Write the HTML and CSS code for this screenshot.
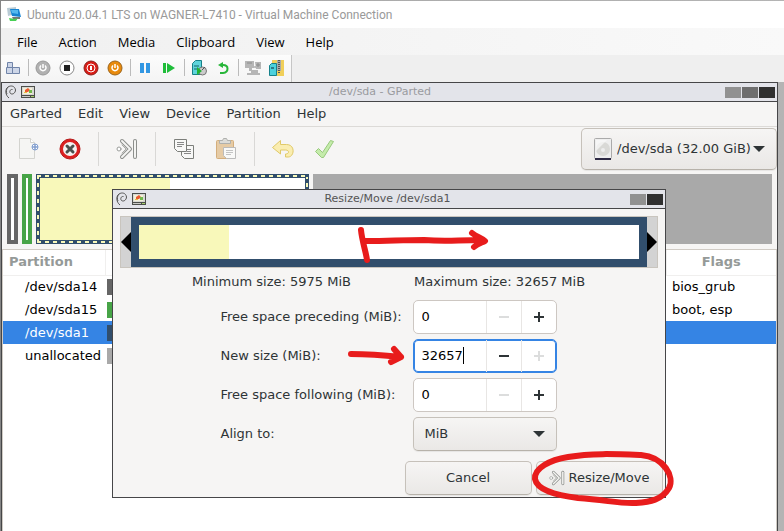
FILE: index.html
```html
<!DOCTYPE html>
<html lang="en">
<head>
<meta charset="utf-8">
<title>Ubuntu 20.04.1 LTS on WAGNER-L7410 - Virtual Machine Connection</title>
<link rel="stylesheet" href="styles.css">
</head>
<body>
<svg class="defs" aria-hidden="true">
  <defs>
    <symbol id="swirl" viewBox="0 0 12 14"><path d="M4 13C0 10 0 4 3 2 6 0 10 1 10.500 5c0 3-3 5-5 3.500C4 7 5 4 7.500 4.500M3 2C1 4 1 7 2 9" fill="none" stroke="#555" stroke-width="1"/></symbol>
    <symbol id="gparted" viewBox="0 0 14 12"><path d="M0 0h14v12H0z" fill="#4c4e4a"/><path d="M1 1h12v8H1z" fill="#d8d8d2"/><path d="M2 2h9v6H2z" fill="#f3efd8"/><path d="M4 4l3-2 2 2-2 2H4z" fill="#ec5a30"/><path d="M8 4h3v3H8z" fill="#71b84c"/><path d="M3 6h3v1H3z" fill="#e5bc45"/><path d="M1 10h8v1H1z" fill="#c8c8c4"/><path d="M10 10h3v1h-3z" fill="#a6d06c"/></symbol>
    <symbol id="resize" viewBox="0 0 22 22"><g fill="none" stroke-linecap="round" stroke-linejoin="round"><path d="M6 3l8 8-8 8" stroke="#8d8f8c" stroke-width="4"/><path d="M6 3l8 8-8 8" stroke="#f4f4f2" stroke-width="2"/><path d="M6 7l4 4-4 4" stroke="#a9aba8"/><circle cx="3" cy="11" r="2" fill="#fff" stroke="#9b9d9a"/><path d="M19 3v16" stroke="#8d8f8c" stroke-width="4"/><path d="M19 3v16" stroke="#f4f4f2" stroke-width="2"/></g></symbol>
  </defs>
</svg>
<header class="vm">
  <div class="vm-title">
    <svg width="15" height="15" viewBox="0 0 15 15"><path d="M0 1l9-1v7L1 9z" fill="#b9cbd5"/><path d="M3 2l9 0 2 8-9-1z" fill="#1784d1"/><path d="M4 3l7 0v4L5 6z" fill="#54b9ef"/><path d="M5 10h8v2H6z" fill="#777"/><path d="M2 11l6 1 3-1-2 3-6 0z" fill="#48cf55"/></svg>
    <span>Ubuntu 20.04.1 LTS on WAGNER-L7410 - Virtual Machine Connection</span>
  </div>
  <nav class="vm-menu"><button>File</button><button>Action</button><button>Media</button><button>Clipboard</button><button>View</button><button>Help</button></nav>
  <div class="vm-tools">
    <button aria-label="Ctrl+Alt+Delete"><svg width="16" height="16" viewBox="0 0 16 16"><g fill="#cdd6e8" stroke="#7084a8"><path d="M2.500 2.500h5v5h-5zM1.500 7.500h6v6h-6zM7.500 7.500h7v6h-7z"/></g></svg></button>
    <i></i>
    <button aria-label="Start"><svg width="16" height="16" viewBox="0 0 16 16"><circle cx="8" cy="8" r="7" fill="#b1b1b1" stroke="#999"/><path d="M6 5.500a3 3 0 1 0 4 0M8 4v4" fill="none" stroke="#fff" stroke-width="1.500"/></svg></button>
    <button aria-label="Turn off"><svg width="16" height="16" viewBox="0 0 16 16"><circle cx="8" cy="8" r="7" fill="#fff" stroke="#888"/><path d="M5 5h6v6H5z" fill="#222"/></svg></button>
    <button aria-label="Shut down"><svg width="16" height="16" viewBox="0 0 16 16"><circle cx="8" cy="8" r="7" fill="#d91c16" stroke="#8d201c"/><circle cx="8" cy="8" r="4" fill="none" stroke="#fff" stroke-width="1"/><path d="M8 6v4" stroke="#fff" stroke-width="2"/></svg></button>
    <button aria-label="Save"><svg width="16" height="16" viewBox="0 0 16 16"><circle cx="8" cy="8" r="7" fill="#e88a0c" stroke="#9a641c"/><path d="M6 5.500a3 3 0 1 0 4 0M8 4v4" fill="none" stroke="#fff" stroke-width="1.500"/></svg></button>
    <i></i>
    <button aria-label="Pause"><svg width="16" height="16" viewBox="0 0 16 16"><path d="M3 3h4v10H3zM9 3h4v10H9z" fill="#3297e3"/></svg></button>
    <button aria-label="Reset"><svg width="16" height="16" viewBox="0 0 16 16"><path d="M2 3h3v10H2zM6 3l8 5-8 5z" fill="#1fbd3a"/></svg></button>
    <i></i>
    <button aria-label="Checkpoint"><svg width="16" height="16" viewBox="0 0 16 16"><path d="M1.500 3.500l3-3h6v14h-9z" fill="#5fd4db" stroke="#178088"/><path d="M3 6h5M3 9h4" stroke="#15636b"/><circle cx="11.500" cy="11" r="4" fill="#ccc" stroke="#777"/><path d="M6 7l5 4-5 4z" fill="#22b331"/><path d="M11 10l3-3" stroke="#555"/></svg></button>
    <button aria-label="Revert"><svg width="16" height="16" viewBox="0 0 16 16"><path d="M5 5h3c6 0 6 7 0 8H5" fill="none" stroke="#28b63a" stroke-width="2"/><path d="M8 2v6L3 5z" fill="#28b63a"/></svg></button>
    <i></i>
    <button aria-label="Enhanced session"><svg width="16" height="16" viewBox="0 0 16 16"><path d="M0 1h9v7H0zM10 2h6v7h-5zM4 8h3v3H4zM6 10h7v3H6zM2 13h13v2H2z" fill="#b6b6b6"/><path d="M9 7h2M11 5h4M13 3v4M2 3h5" stroke="#8c8c8c"/></svg></button>
    <button aria-label="Share"><svg width="16" height="16" viewBox="0 0 16 16"><path d="M3 0h12v16H3z" fill="#f0cf5a"/><path d="M8 0h4v11H8z" fill="#aaa"/><path d="M10 0v13" stroke="#555" stroke-dasharray="1 1" stroke-width="2"/><path d="M.5 5.500l2-2h5v12h-7z" fill="#4dd1dc" stroke="#16818b"/><path d="M2 8h3" stroke="#123"/></svg></button>
  </div>
</header>
<main class="win">
  <div class="bar">
    <svg width="12" height="14"><use href="#swirl"/></svg><svg width="14" height="12"><use href="#gparted"/></svg>
    <h1>/dev/sda - GParted</h1>
    <div class="ctl"><button class="c1" aria-label="Minimize"></button><button class="c2" aria-label="Maximize"></button><button class="c3" aria-label="Close"></button></div>
  </div>
  <nav class="menu"><button>GParted</button><button>Edit</button><button>View</button><button>Device</button><button>Partition</button><button>Help</button></nav>
  <div class="tools">
    <button aria-label="New"><svg width="22" height="24" viewBox="0 0 22 24"><path d="M2.500 1.500h11l4 4v16h-15z" fill="#f5f5f3" stroke="#d3d3cf"/><path d="M13.500 1.500v4h4" fill="#fff" stroke="#d3d3cf"/><circle cx="18" cy="10" r="3" fill="#fff" stroke="#829fcf"/><path d="M18 7v6M15 10h6" stroke="#829fcf" stroke-width="1.500"/></svg></button>
    <button aria-label="Delete"><svg width="22" height="22" viewBox="0 0 22 22"><circle cx="11" cy="11" r="8.500" fill="#f4f3f2" stroke="#dc2020" stroke-width="3"/><circle cx="11" cy="11" r="10" fill="none" stroke="#b51b1b" stroke-width="1"/><path d="M8 8l6 6M14 8l-6 6" stroke="#4c504d" stroke-width="3" stroke-linecap="round"/></svg></button>
    <i></i>
    <button aria-label="Resize/Move"><svg width="22" height="22"><use href="#resize"/></svg></button>
    <i></i>
    <button aria-label="Copy"><svg width="22" height="22" viewBox="0 0 22 22"><g fill="#f8f8f7" stroke="#7c7e7a"><path d="M8.500 7.500h12v13h-9l-3-3z"/><path d="M1.500 1.500h12v12h-9l-3-3z"/></g><path d="M4 4.500h7M4 6.500h7M4 8.500h5M14 11.500h4M14 13.500h4M11 15.500h7" stroke="#888"/></svg></button>
    <button aria-label="Paste"><svg width="22" height="22" viewBox="0 0 22 22"><rect x="1.500" y="2.500" width="17" height="18" rx="1" fill="#e6cba5" stroke="#d4ae7c"/><path d="M4.500 5.500v-3h3l1-2h3l1 2h3v3z" fill="#dcdcd9" stroke="#afb0ad"/><path d="M8.500 9.500h12v11h-9l-3-3z" fill="#f9f9f8" stroke="#bbb"/><path d="M11 12.500h7M11 14.500h7M11 16.500h5" stroke="#c3c3c3"/></svg></button>
    <i></i>
    <button aria-label="Undo"><svg width="24" height="20" viewBox="0 0 24 20"><path d="M1.500 8.500l8-7v4h6c9 0 8 12 2 12.500h-3v-3c4 0 4-4 0-4h-5v4z" fill="#faedb0" stroke="#e0c968"/></svg></button>
    <button aria-label="Apply"><svg width="22" height="22" viewBox="0 0 22 22"><path d="M1.500 13.500l3-3 4 4 8-12 3 1-10 16h-2z" fill="#c5ecab" stroke="#98c97c"/></svg></button>
    <div class="device">
      <svg width="18" height="22" viewBox="0 0 18 22"><rect x=".5" y=".5" width="17" height="20" rx="1" fill="#eee" stroke="#aaa"/><ellipse cx="9" cy="11" rx="7" ry="7" fill="#d9d9d6"/><path d="M2 13V2h11z" fill="#fafafa" opacity=".7"/><circle cx="9" cy="12" r="2" fill="#eee"/><path d="M1 20h16v2H1z" fill="#2e2a44"/></svg>
      <select aria-label="Device"><option>/dev/sda (32.00 GiB)</option></select>
      <svg class="arrow" width="12" height="6"><path d="M0 0h12L6 6z" fill="#2e3436"/></svg>
    </div>
  </div>
  <div class="disk"><div class="p14"></div><div class="p15"></div><div class="p1"><div></div></div><div class="free"></div></div>
  <div class="list">
    <table>
      <colgroup><col class="name"><col><col class="flags"></colgroup>
      <thead><tr><th>Partition</th><th></th><th class="center">Flags</th></tr></thead>
      <tbody>
        <tr><td>/dev/sda14</td><td><span class="sw gray"></span></td><td>bios_grub</td></tr>
        <tr><td>/dev/sda15</td><td><span class="sw green"></span></td><td>boot, esp</td></tr>
        <tr class="sel"><td>/dev/sda1</td><td><span class="sw navy"></span></td><td></td></tr>
        <tr><td>unallocated</td><td><span class="sw light"></span></td><td></td></tr>
      </tbody>
    </table>
  </div>
  <section class="dialog" role="dialog" aria-labelledby="dt">
    <div class="bar">
      <svg width="12" height="14"><use href="#swirl"/></svg><svg width="14" height="12"><use href="#gparted"/></svg>
      <h2 id="dt">Resize/Move /dev/sda1</h2>
      <div class="ctl"><button class="c1" aria-label="Maximize"></button><button class="c3" aria-label="Close"></button></div>
    </div>
    <div class="sizer">
      <svg width="10" height="20"><path d="M10 0v20L0 10z"/></svg>
      <div class="part"><div></div></div>
      <svg width="10" height="20"><path d="M0 0v20l10-10z"/></svg>
    </div>
    <div class="limits"><span>Minimum size: 5975 MiB</span><span>Maximum size: 32657 MiB</span></div>
    <form class="fields">
      <label for="before">Free space preceding (MiB):</label>
      <div class="spin"><input id="before" value="0"><button type="button" disabled aria-label="Decrease"><svg width="12" height="12"><path d="M1 6h10"/></svg></button><button type="button" aria-label="Increase"><svg width="12" height="12"><path d="M1 6h10M6 1v10"/></svg></button></div>
      <label for="size">New size (MiB):</label>
      <div class="spin focus"><input id="size" value="32657"><button type="button" aria-label="Decrease"><svg width="12" height="12"><path d="M1 6h10"/></svg></button><button type="button" disabled aria-label="Increase"><svg width="12" height="12"><path d="M1 6h10M6 1v10"/></svg></button></div>
      <label for="after">Free space following (MiB):</label>
      <div class="spin"><input id="after" value="0"><button type="button" disabled aria-label="Decrease"><svg width="12" height="12"><path d="M1 6h10"/></svg></button><button type="button" aria-label="Increase"><svg width="12" height="12"><path d="M1 6h10M6 1v10"/></svg></button></div>
      <label for="align">Align to:</label>
      <div class="combo"><select id="align"><option>MiB</option></select><svg class="arrow" width="12" height="6"><path d="M0 0h12L6 6z" fill="#2e3436"/></svg></div>
    </form>
    <div class="actions"><button>Cancel</button><button><svg width="16" height="16"><use href="#resize"/></svg>Resize/Move</button></div>
    <svg class="marks" width="570" height="330" viewBox="112 189 570 330" aria-hidden="true">
      <g fill="none" stroke="#e81c1c" stroke-width="6" stroke-linecap="round" stroke-linejoin="round">
        <path d="M361 230C362 241 366 252 367 260M366 241C390 241 400 240 424 240 448 242 455 240 483 240M472 233C477 237 482 238 485 241 481 243 477 244 474 247"/>
        <path d="M351 354C366 354 382 355 401 357M394 349L401 357 391 362"/>
        <path d="M568 457C550 460 534 468 535 479 537 490 555 495 578 498 607 500 620 504 636 503 650 502 662 500 669 488 675 477 664 457 641 455 615 454 591 453 568 457z"/>
      </g>
    </svg>
  </section>
</main>
</body>
</html>
```
FILE: styles.css
```css
* { box-sizing: border-box; }
body {
  margin: 0;
  height: 100vh;
  overflow: hidden;
  display: flex;
  flex-direction: column;
  padding: 1px 0 0 1px;
  background: linear-gradient(90deg, #858585, #a6a6a6 20%, #b4b4b4);
  font: 13px/16px "DejaVu Sans", sans-serif;
  color: #2e3436;
}
button, input, select { font: inherit; color: inherit; margin: 0; padding: 0; border: 0; background: none; }
svg { display: block; flex: none; }
.defs { position: absolute; width: 0; height: 0; }

.vm { font-family: "Open Sans", sans-serif; background: #efefef; }
.vm-title { display: flex; align-items: center; gap: 5px; height: 27px; padding-left: 6px; background: #fff; color: #999; font-family: Roboto, sans-serif; font-size: 12px; }
.vm-menu { display: flex; align-items: center; gap: 21px; height: 27px; padding-left: 16px; background: linear-gradient(90deg, #f0f0f0, #f9f9f9); color: #000; }
.vm-tools { display: flex; align-items: center; gap: 8px; height: 27px; width: 291px; padding: 0 0 2px 4px; background: linear-gradient(#fcfcfc, #f4f4f4); border-right: 1px solid #c6c6c6; }
.vm-tools i { width: 1px; height: 17px; margin: 0 -2px 0 -1px; background: #bbb; }

.win { position: relative; flex: 1; display: flex; flex-direction: column; margin-right: 6px; border: 1px solid #464648; border-bottom: 0; background: #f6f5f4; }
.bar { position: relative; display: flex; align-items: center; gap: 4px; height: 19px; padding: 0 3px; background: #e3e4ea; border-bottom: 1px solid #464648; }
.bar h1, .bar h2 { flex: 1; margin: 0; text-align: center; font-size: 11px; font-weight: 400; color: #555; }
.bar h1 { color: #9a9b9f; }
.ctl { display: flex; gap: 1px; margin-right: -1px; }
.ctl button { width: 16px; height: 11px; }
.c1 { background: #919191; }
.c2 { background: #6e6e6e; }
.c3 { background: #303030; }

.menu { display: flex; align-items: center; gap: 16px; height: 25px; padding-left: 8px; border-bottom: 1px solid #dcdad7; }
.tools { display: flex; align-items: center; height: 43px; padding-left: 5px; }
.tools > button { display: grid; place-items: center; width: 42px; height: 36px; }
.tools > i { width: 1px; height: 34px; margin: 0 7px; background: #d9d8d6; }
.device, .combo { position: relative; display: flex; align-items: center; border: 1px solid #c6c1ba; border-bottom-color: #b7b2aa; border-radius: 5px; background: linear-gradient(#f6f5f4, #eae8e6); box-shadow: 0 1px 1px #0001; }
.device { width: 196px; height: 42px; margin-left: auto; }
.device svg:first-child { position: absolute; left: 12px; }
.device select { padding-left: 35px; }
select { appearance: none; width: 100%; height: 100%; }
.arrow { position: absolute; right: 11px; pointer-events: none; }

.disk { display: flex; gap: 4px; height: 70px; margin: 4px 5px 5px; }
.p14, .p15 { width: 11px; border: 4px solid #666; background: #fff; }
.p15 { width: 10px; border-color: #47a447; }
.p1 {
  width: 273px; padding: 4px; background-color: #314e6c;
  background-image:
    repeating-linear-gradient(90deg, #f8f8ba 0 4px, #314e6c 4px 8px),
    repeating-linear-gradient(90deg, #f8f8ba 0 4px, #314e6c 4px 8px),
    repeating-linear-gradient(#f8f8ba 0 4px, #314e6c 4px 8px),
    repeating-linear-gradient(#f8f8ba 0 4px, #314e6c 4px 8px);
  background-size: calc(100% - 2px) 2px, calc(100% - 2px) 2px, 2px calc(100% - 2px), 2px calc(100% - 2px);
  background-position: 1px 1px, 1px calc(100% - 1px), 1px 1px, calc(100% - 1px) 1px;
  background-repeat: no-repeat;
}
.p1 div { height: 100%; background: linear-gradient(90deg, #f8f8ba 49%, #fff 49%); }
.free { flex: 1; background: #a9a9a9; }

.list { flex: 1; border: 1px solid #d0cbc4; border-width: 1px 1px 0; background: #fff; color: #000; }
table { width: 100%; table-layout: fixed; border-collapse: collapse; }
.name { width: 102px; }
.flags { width: 110px; }
th { height: 25px; padding: 0 6px; border: 1px solid #f0efee; border-width: 0 1px 1px 0; text-align: left; color: #959a98; }
th.center { text-align: center; border-right: 0; }
td { height: 23px; padding: 0 0 0 22px; white-space: nowrap; }
td:nth-child(2) { padding-left: 2px; }
td:nth-child(3) { padding-left: 6px; }
.sel { background: #3584e4; color: #fff; }
.sw { display: block; width: 16px; height: 16px; background: #666; }
.green { background: #47a447; }
.navy { background: #314e6c; }
.light { background: #a9a9a9; }

.dialog { position: absolute; top: 106px; left: 50%; width: 554px; margin-left: -278px; border: 1px solid #464648; background: #f6f5f4; }
.sizer { display: flex; align-items: center; height: 52px; margin: 7px; border: 1px solid #c9c5be; background: #d3d3d3; }
.part { flex: 1; height: 50px; border: 8px solid #314e6c; background: #fff; }
.part div { width: 18%; height: 100%; background: #f8f8ba; }
.limits { display: flex; justify-content: center; gap: 63px; height: 25px; margin-top: -1px; margin-bottom: 1px; }
.fields { display: grid; grid-template-columns: 187px 144px; gap: 5px; justify-content: center; align-items: center; margin: 0; }
.spin { display: flex; height: 34px; border: 1px solid #cdc7c2; border-radius: 5px; background: #fff; color: #000; position: relative; }
.spin input { flex: 1; min-width: 0; padding-left: 8px; outline: 0; }
.spin button { display: grid; place-items: center; width: 35px; border-left: 1px solid #e8e6e4; }
.spin path { fill: none; stroke: #2e3436; stroke-width: 2; }
.spin button:disabled path { stroke: #dcdddd; }
.focus { border-color: #3584e4; box-shadow: inset 0 0 0 1px #3584e4; }
.focus::after { content: ""; position: absolute; left: 49px; top: 7px; width: 1px; height: 17px; background: #000; }
.combo { height: 34px; }
.combo select { padding-left: 11px; }
.actions { display: flex; justify-content: flex-end; gap: 4px; padding: 10px 2px 2px; }
.actions button { display: flex; align-items: center; justify-content: center; gap: 4px; width: 127px; height: 34px; border: 1px solid #c6c1ba; border-bottom-color: #b7b2aa; border-radius: 5px; background: linear-gradient(#f6f5f4, #eae8e6); box-shadow: 0 1px 1px #0001; }
.marks { position: absolute; top: -1px; left: -1px; pointer-events: none; }
```
